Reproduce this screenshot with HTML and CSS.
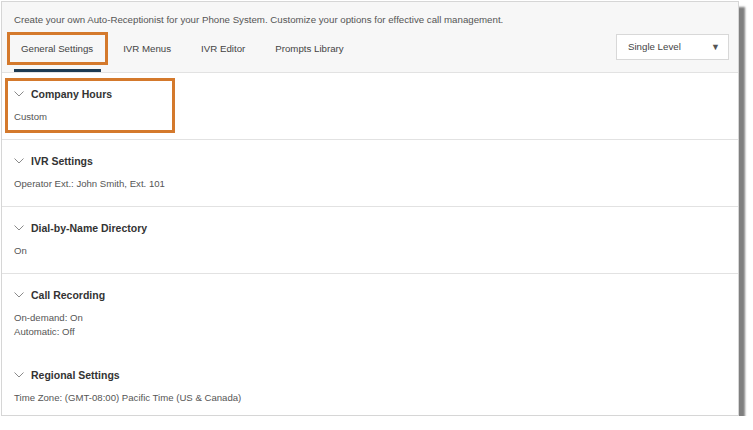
FILE: index.html
```html
<!DOCTYPE html>
<html>
<head>
    <link rel="stylesheet" href="styles.css">
</head>
<body>
    <div class="frame">
        <div class="top">
            <p class="intro">Create your own Auto-Receptionist for your Phone System. Customize your options for effective call management.</p>
            <div class="tab-row">
                <div class="tabs">
                    <div class="tab active">General Settings</div>
                    <div class="tab">IVR Menus</div>
                    <div class="tab">IVR Editor</div>
                    <div class="tab">Prompts Library</div>
                </div>
                <div class="select">
                    <span>Single Level</span>
                    <span class="arrow">▼</span>
                </div>
            </div>
        </div>

        <div class="section">
            <div class="title">
                <svg class="chev" width="10" height="6" viewBox="0 0 10 6"><path d="M0.5 0.5 L5 5 L9.5 0.5" /></svg>
                Company Hours
            </div>
            <div class="value">Custom</div>
        </div>

        <div class="section">
            <div class="title">
                <svg class="chev" width="10" height="6" viewBox="0 0 10 6"><path d="M0.5 0.5 L5 5 L9.5 0.5" /></svg>
                IVR Settings
            </div>
            <div class="value">Operator Ext.: John Smith, Ext. 101</div>
        </div>

        <div class="section">
            <div class="title">
                <svg class="chev" width="10" height="6" viewBox="0 0 10 6"><path d="M0.5 0.5 L5 5 L9.5 0.5" /></svg>
                Dial-by-Name Directory
            </div>
            <div class="value">On</div>
        </div>

        <div class="section no-line">
            <div class="title">
                <svg class="chev" width="10" height="6" viewBox="0 0 10 6"><path d="M0.5 0.5 L5 5 L9.5 0.5" /></svg>
                Call Recording
            </div>
            <div class="value">On-demand: On<br>Automatic: Off</div>
        </div>

        <div class="section last">
            <div class="title">
                <svg class="chev" width="10" height="6" viewBox="0 0 10 6"><path d="M0.5 0.5 L5 5 L9.5 0.5" /></svg>
                Regional Settings
            </div>
            <div class="value">Time Zone: (GMT-08:00) Pacific Time (US &amp; Canada)</div>
        </div>

        <!-- annotation boxes drawn over the screenshot -->
        <div class="mark mark-tab"></div>
        <div class="mark mark-hours"></div>
    </div>
</body>
</html>
```

FILE: styles.css
```css
body {
    margin: 0;
    background: #fff;
    font-family: "Liberation Sans", Arial, sans-serif;
    color: #333;
}
.frame {
    position: relative;
    width: 736px;
    margin: 1px 0 0 1px;
    border: 1px solid #d6d6d6;
    background: #fff;
    box-shadow: 6px 6px 2px rgba(0, 0, 0, 0.5);
}
.top {
    background: #f7f7f7;
    border-bottom: 1px solid #e2e2e2;
}
.intro {
    margin: 0;
    padding: 11px 0 0 12px;
    font-size: 9.7px;
    line-height: 13px;
    color: #555;
}
.tab-row {
    display: flex;
    justify-content: space-between;
    align-items: center;
    padding: 0 9px 0 12px;
}
.tabs {
    display: flex;
    gap: 14px;
}
.tab {
    padding: 16px 8px 17px 8px;
    font-size: 9.7px;
    line-height: 13px;
    color: #444;
}
.tab.active {
    padding-left: 7px;
    padding-bottom: 14px;
    border-bottom: 3px solid #1d3a52;
}
.select {
    display: flex;
    justify-content: space-between;
    align-items: center;
    width: 92px;
    height: 24px;
    padding: 0 8px 0 11px;
    border: 1px solid #d8d8d8;
    background: #fff;
    font-size: 9.7px;
    color: #444;
    margin-bottom: 5px;
}
.select .arrow {
    font-size: 9px;
    color: #555;
}
.section {
    padding: 13px 12px 15px 12px;
    border-bottom: 1px solid #e2e2e2;
}
.section.no-line {
    border-bottom-color: transparent;
    padding-bottom: 14px;
}
.section.last {
    border-bottom: none;
    padding-bottom: 10px;
}
.title {
    display: flex;
    align-items: center;
    height: 16px;
    margin-bottom: 8px;
    font-size: 10.5px;
    font-weight: bold;
    color: #333;
}
.chev {
    margin-right: 7px;
    fill: none;
    stroke: #8a8a8a;
    stroke-width: 1;
}
.value {
    font-size: 9.6px;
    line-height: 14px;
    color: #555;
}
.mark {
    position: absolute;
    border: 3px solid #d4792c;
}
.mark-tab {
    left: 5px;
    top: 30px;
    width: 95px;
    height: 27px;
}
.mark-hours {
    left: 3px;
    top: 76px;
    width: 164px;
    height: 49px;
}
```
